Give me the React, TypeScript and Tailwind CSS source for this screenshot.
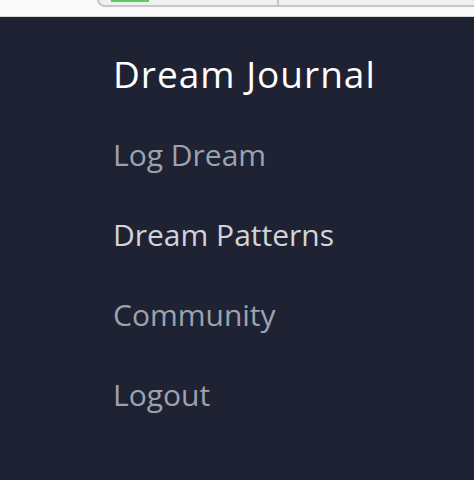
export default function App() {
  const links = [
    { label: 'Log Dream', active: false },
    { label: 'Dream Patterns', active: true },
    { label: 'Community', active: false },
    { label: 'Logout', active: false },
  ];

  return (
    <div className="h-[480px] w-[474px] overflow-hidden bg-[#1f2233] font-['Open_Sans',sans-serif]">
      <div className="relative h-[17px] border-b border-[#d6d6d6] bg-[#f9f9f9]">
        <div className="absolute left-[97px] top-[-10px] flex h-[17px] w-[400px] rounded-b-[8px] border-2 border-[#c6c6c6] bg-[#eef0f2]">
          <div className="ml-[12px] mt-[8px] h-[2px] w-[38px] bg-[#5fc95f]" />
          <div className="ml-[128px] h-full w-[2px] bg-[#c6c6c6]" />
        </div>
      </div>
      <nav className="flex flex-col pl-[113px] pt-[35px]">
        <h1 className="text-[37px] leading-[44px] tracking-[1px] text-white">Dream Journal</h1>
        <ul className="mt-[41px] flex flex-col gap-[44px]">
          {links.map((link) => (
            <li
              key={link.label}
              className={`text-[30px] leading-[36px] ${link.active ? 'text-[#d1d5db]' : 'text-[#9ca3af]'}`}
            >
              {link.label}
            </li>
          ))}
        </ul>
      </nav>
    </div>
  );
}
